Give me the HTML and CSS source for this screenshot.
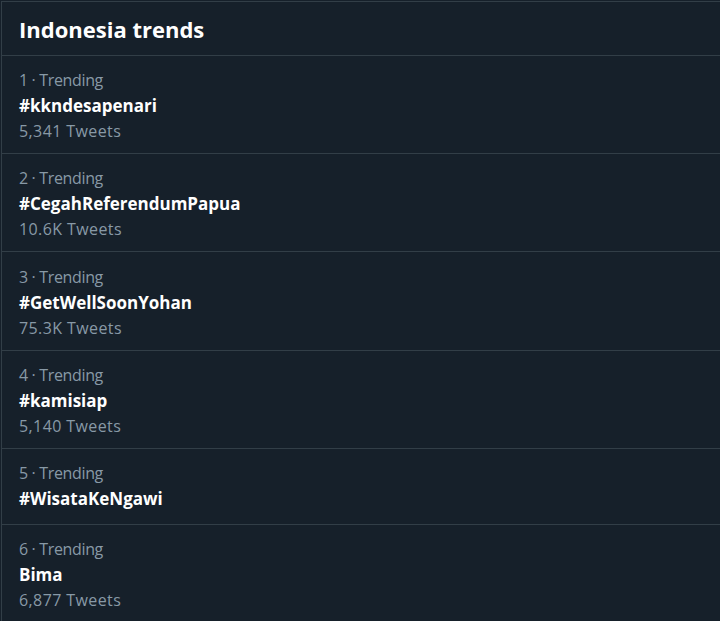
FILE: index.html
```html
<!DOCTYPE html>
<html lang="id">
<head>
<meta charset="utf-8">
<title>Indonesia trends</title>
<link rel="stylesheet" href="styles.css">
</head>
<body>
<section class="panel">
  <header class="panel-header">
    <h2 class="panel-title">Indonesia trends</h2>
  </header>
  <div class="trend">
    <div class="meta">1 · Trending</div>
    <div class="name">#kkndesapenari</div>
    <div class="count">5,341 Tweets</div>
  </div>
  <div class="trend">
    <div class="meta">2 · Trending</div>
    <div class="name">#CegahReferendumPapua</div>
    <div class="count">10.6K Tweets</div>
  </div>
  <div class="trend trend-tall">
    <div class="meta">3 · Trending</div>
    <div class="name">#GetWellSoonYohan</div>
    <div class="count">75.3K Tweets</div>
  </div>
  <div class="trend">
    <div class="meta">4 · Trending</div>
    <div class="name">#kamisiap</div>
    <div class="count">5,140 Tweets</div>
  </div>
  <div class="trend trend-no-count">
    <div class="meta">5 · Trending</div>
    <div class="name">#WisataKeNgawi</div>
  </div>
  <div class="trend">
    <div class="meta">6 · Trending</div>
    <div class="name">Bima</div>
    <div class="count">6,877 Tweets</div>
  </div>
</section>
</body>
</html>
```

FILE: styles.css
```css
html, body {
  margin: 0;
  padding: 0;
  background: #16202a;
}

body {
  font-family: "Open Sans", "Noto Sans", sans-serif;
  color: #ffffff;
  overflow: hidden;
}

.panel {
  margin: 1px 0 0 1px;
  border-top: 1px solid #323e47;
  border-left: 1px solid #323e47;
  background: #16202a;
}

.panel-header {
  height: 53px;
  display: flex;
  align-items: center;
  padding: 0 17px;
  border-bottom: 1px solid #323e47;
}

.panel-title {
  margin: 0;
  font-size: 22px;
  font-weight: 700;
  line-height: 26px;
}

.trend {
  padding: 12px 17px 9px;
  border-bottom: 1px solid #323e47;
}

.trend-tall {
  padding-top: 13px;
}

.trend-no-count {
  padding-bottom: 12px;
}

.meta,
.count {
  font-size: 16px;
  line-height: 25px;
  color: #8899a6;
}

.meta {
  letter-spacing: -0.35px;
}

.count {
  letter-spacing: 0.4px;
}

.name {
  font-size: 17px;
  font-weight: 700;
  line-height: 26px;
  color: #ffffff;
}
```
